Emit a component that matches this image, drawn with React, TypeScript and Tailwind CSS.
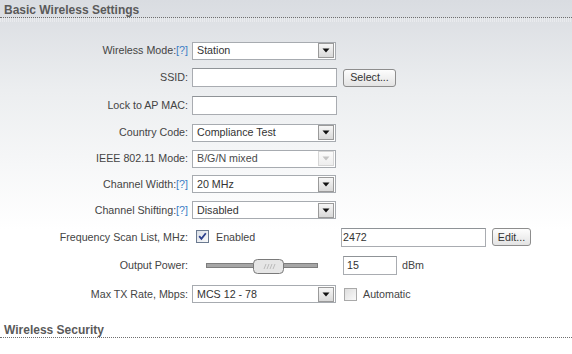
import React from "react";

const font = "font-['Liberation_Sans',Arial,sans-serif]";

function SectionTitle({ title }: { title: string }) {
  return (
    <div className="relative">
      <div className="pl-[4px] text-[12px] leading-[14px] font-bold text-[#5a5a5a] border-b border-dotted border-[#6f6f6f]">
        {title}
      </div>
    </div>
  );
}

function Help() {
  return <span className="text-[#3b7dc4]">[?]</span>;
}

function Arrow({ disabled }: { disabled?: boolean }) {
  return (
    <div
      className={
        "w-[16px] h-[15px] flex items-center justify-center border " +
        (disabled
          ? "border-[#d6d6d6] bg-[linear-gradient(to_bottom,#fbfbfb,#eeeeee)]"
          : "border-[#9a9a9a] bg-[linear-gradient(to_bottom,#f6f6f6,#d9d9d9)]")
      }
    >
      <svg width="8" height="5" viewBox="0 0 8 5">
        <path d="M0.5 0.5 H7.5 L4 4.5 Z" fill={disabled ? "#c4c4c4" : "#111"} />
      </svg>
    </div>
  );
}

function Select({ value, disabled }: { value: string; disabled?: boolean }) {
  return (
    <div
      className={
        "w-[144px] h-[18px] bg-white border border-[#a7abb0] flex items-center justify-between pl-[4px] pr-px " +
        (disabled ? "text-[#4a4a4a]" : "text-[#333]")
      }
    >
      <span>{value}</span>
      <Arrow disabled={disabled} />
    </div>
  );
}

function TextBox({ value, w, pl = "pl-[2px]" }: { value?: string; w: string; pl?: string }) {
  return (
    <div className={w + " h-[19px] bg-white border border-[#a9acb1] border-t-[#8f9397] flex items-center text-[#333] " + pl}>
      {value}
    </div>
  );
}

function Button({ label, w }: { label: string; w: string }) {
  return (
    <div
      className={
        w +
        " h-[18px] rounded-[3px] border border-[#8d8d8d] bg-[linear-gradient(to_bottom,#fdfdfd,#e3e3e3)] flex items-center justify-center text-[#333]"
      }
    >
      {label}
    </div>
  );
}

function Check({ checked }: { checked?: boolean }) {
  return (
    <svg width="13" height="13" viewBox="0 0 13 13">
      <defs>
        <linearGradient id={checked ? "cg1" : "cg2"} x1="0" y1="0" x2="1" y2="1">
          <stop offset="0" stopColor={checked ? "#d9dee6" : "#dcdcdc"} />
          <stop offset="1" stopColor="#fbfbfb" />
        </linearGradient>
      </defs>
      <rect x="0.5" y="0.5" width="12" height="12" fill={`url(#${checked ? "cg1" : "cg2"})`} stroke={checked ? "#6b7a90" : "#a9a9a9"} />
      {checked && <path d="M3.2 6.2 L5.4 8.8 L9.8 3.2" fill="none" stroke="#2b3f8c" strokeWidth="1.8" />}
    </svg>
  );
}

function Slider() {
  return (
    <div className="relative ml-[14px] w-[112px] h-[16px]">
      <div className="absolute left-0 right-0 top-[5px] h-[5px] bg-[#a6a6a6] border border-[#7d7d7d]" />
      <svg className="absolute left-[47px] top-[1px]" width="31" height="15" viewBox="0 0 31 15">
        <rect x="0.5" y="0.5" width="30" height="14" rx="4" fill="#e6e6e6" stroke="#7a7a7a" />
        <path d="M11 10 L13 5 M14 10 L16 5 M17 10 L19 5 M20 10 L22 5" stroke="#b0b0b0" strokeWidth="0.8" />
      </svg>
    </div>
  );
}

function Row({ h, label, children }: { h: string; label: React.ReactNode; children: React.ReactNode }) {
  return (
    <div className={"flex items-center " + h}>
      <div className="w-[188px] text-right text-[#444] whitespace-nowrap">{label}</div>
      <div className="ml-[4px] flex items-center">{children}</div>
    </div>
  );
}

export default function App() {
  return (
    <div className={"w-full h-[354px] overflow-hidden bg-[linear-gradient(to_bottom,#d9dce1,#eceef0_90px,#ffffff_230px)] text-[10.7px] " + font}>
      <div className="pt-[3px]">
        <SectionTitle title="Basic Wireless Settings" />
        <div className="h-[4px] bg-[repeating-linear-gradient(90deg,rgba(255,255,255,0.35)_0px,rgba(255,255,255,0.35)_1px,transparent_1px,transparent_2px)]" />
      </div>

      <div className="mt-[15px]">
        <Row h="h-[27px]" label={<>Wireless Mode:<Help /></>}>
          <Select value="Station" />
        </Row>
        <Row h="h-[27px]" label="SSID:">
          <TextBox w="w-[145px]" />
          <div className="ml-[6px]">
            <Button label="Select..." w="w-[53px]" />
          </div>
        </Row>
        <Row h="h-[28px]" label="Lock to AP MAC:">
          <TextBox w="w-[145px]" />
        </Row>
        <Row h="h-[27px]" label="Country Code:">
          <Select value="Compliance Test" />
        </Row>
        <Row h="h-[25px]" label="IEEE 802.11 Mode:">
          <Select value="B/G/N mixed" disabled />
        </Row>
        <Row h="h-[26px]" label={<>Channel Width:<Help /></>}>
          <Select value="20 MHz" />
        </Row>
        <Row h="h-[26px]" label={<>Channel Shifting:<Help /></>}>
          <Select value="Disabled" />
        </Row>
        <Row h="h-[28px]" label="Frequency Scan List, MHz:">
          <div className="w-[149px] flex items-center">
            <div className="ml-[4px] flex">
              <Check checked />
            </div>
            <span className="ml-[7px] text-[#444]">Enabled</span>
          </div>
          <TextBox value="2472" w="w-[145px]" pl="pl-[1px]" />
          <div className="ml-[6px]">
            <Button label="Edit..." w="w-[39px]" />
          </div>
        </Row>
        <Row h="h-[29px]" label="Output Power:">
          <div className="w-[151px] flex items-center">
            <Slider />
          </div>
          <TextBox value="15" w="w-[54px]" pl="pl-[3px]" />
          <span className="ml-[5px] text-[#444]">dBm</span>
        </Row>
        <Row h="h-[28px]" label="Max TX Rate, Mbps:">
          <Select value="MCS 12 - 78" />
          <div className="ml-[8px] flex">
            <Check />
          </div>
          <span className="ml-[6px] text-[#444]">Automatic</span>
        </Row>
      </div>

      <div className="mt-[15px]">
        <SectionTitle title="Wireless Security" />
      </div>
    </div>
  );
}
